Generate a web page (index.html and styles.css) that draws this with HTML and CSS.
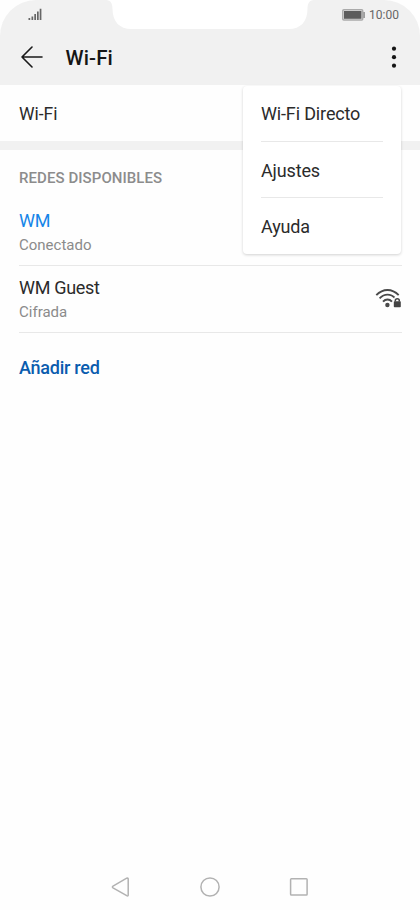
FILE: index.html
```
<!DOCTYPE html>
<html lang="es">
<head>
<meta charset="utf-8">
<title>Wi-Fi</title>
<link rel="stylesheet" href="styles.css">
</head>
<body>
<div class="phone">
  <header class="header">
    <svg class="notch" width="208" height="30" viewBox="0 0 208 30"><path d="M0 0C5 0 6.500 4 6.500 9C6.500 22 14 29 25 29H183C194 29 201.500 22 201.500 9C201.500 4 203 0 208 0Z" fill="#fff"/></svg>
    <div class="status">
      <svg class="signal" width="14" height="13" viewBox="0 0 14 13" fill="#666"><path d="M.5 10h1.700v2H.5zM3.500 8.500h1.700V12H3.500zM6.300 6h1.700v6H6.300zM9 3.500h1.700V12H9zM11.700.8h1.700V12h-1.700z"/></svg>
      <svg class="battery" width="24" height="12" viewBox="0 0 24 12"><rect x=".8" y=".8" width="19.900" height="10.200" rx="1" fill="#eee" stroke="#aaa" stroke-width="1.500"/><rect x="2" y="2" width="17.500" height="7.800" fill="#5d5d5d"/><path d="M21.400 3h1.400v6h-1.400z" fill="#888"/></svg>
      <span class="clock">10:00</span>
    </div>
    <div class="toolbar">
      <svg class="back" width="22" height="22" viewBox="0 0 22 22" fill="none" stroke="#1a1a1a" stroke-width="1.600" stroke-linecap="round" stroke-linejoin="round"><path d="M11 1L1 11L11 21M1 11H21"/></svg>
      <h1 class="title">Wi-Fi</h1>
      <svg class="more" width="6" height="22" viewBox="0 0 6 22" fill="#151515"><circle cx="3" cy="2.700" r="2.100"/><circle cx="3" cy="11.200" r="2.100"/><circle cx="3" cy="19.700" r="2.100"/></svg>
    </div>
    <nav class="menu">
      <div class="menu-item">Wi-Fi Directo</div>
      <div class="menu-item">Ajustes</div>
      <div class="menu-item">Ayuda</div>
    </nav>
  </header>
  <main>
    <div class="switch-row">Wi-Fi</div>
    <section class="networks">
      <h2 class="section-title">REDES DISPONIBLES</h2>
      <div class="network">
        <div><div class="name connected">WM</div><div class="state">Conectado</div></div>
      </div>
      <div class="network">
        <div><div class="name">WM Guest</div><div class="state">Cifrada</div></div>
        <svg class="wifi" width="27" height="20" viewBox="0 0 27 20"><g fill="none" stroke="#4a4a4a" stroke-width="1.900"><path d="M1.300 7.200C8 .2 17 .2 23.700 7.200"/><path d="M4.600 10.400C9.400 5.400 15.600 5.400 20.400 10.400"/><path d="M8 13.600C10.700 10.700 14.300 10.700 17 13.600"/></g><circle cx="12.400" cy="17" r="2.200" fill="#4a4a4a"/><path d="M18 12H19V11.500A3.200 3.200 0 0 1 25.400 11.500V12H26.300V20H18Z" fill="#fff"/><rect x="18.800" y="13.300" width="7" height="6" rx=".7" fill="#444"/><path d="M20.300 13.600V12.800A2 2 0 0 1 24.300 12.800V13.600" fill="none" stroke="#444" stroke-width="1.500"/></svg>
      </div>
      <div class="add">Añadir red</div>
    </section>
  </main>
  <footer class="nav">
    <svg width="20" height="20" viewBox="0 0 20 20"><path d="M2 9.200L15.700 1.200Q17.200.5 17.200 2V18Q17.200 19.500 15.700 18.700L2 10.800Q.8 10 2 9.200Z"/></svg>
    <svg width="20" height="20" viewBox="0 0 20 20"><circle cx="10" cy="10" r="9.100"/></svg>
    <svg width="20" height="20" viewBox="0 0 20 20"><rect x="1.600" y="1.700" width="16.500" height="16.300" rx=".8"/></svg>
  </footer>
</div>
</body>
</html>
```
FILE: styles.css
```
* { box-sizing: border-box; }
body { margin: 0; background: #fff; font-family: Roboto, sans-serif; color: #2b2b2b; }
svg { display: block; flex: none; }
h1, h2 { margin: 0; }
.phone { width: 420px; height: 910px; display: flex; flex-direction: column; background: #fefefe; }
.header { position: relative; height: 85px; background: #f1f1f1; border-radius: 36px 36px 0 0; }
.notch { position: absolute; left: 106px; top: 0; }
.status { height: 29px; display: flex; align-items: center; padding: 0 21px 0 28px; }
.battery { margin-left: auto; }
.clock { width: 30px; margin-left: 3px; font-size: 12px; line-height: 30px; color: #666; white-space: nowrap; }
.toolbar { height: 56px; display: flex; align-items: center; padding: 0 23px 0 21px; }
.title { margin-left: 22.600px; padding-top: 2px; font-size: 20.500px; font-weight: 500; line-height: 24px; letter-spacing: .1px; color: #151515; }
.more { margin-left: auto; }
.menu { position: absolute; z-index: 1; left: 243px; top: 86px; width: 158px; height: 168px; padding: 0 18px; background: #fff; border-radius: 4px; box-shadow: 0 1px 3px rgba(0, 0, 0, .18); }
.menu-item { height: 56px; line-height: 57px; font-size: 18px; letter-spacing: -.15px; border-bottom: 1px solid #e8e8e8; white-space: nowrap; }
.menu-item:first-child { line-height: 55px; }
.menu-item:last-child { border-bottom: 0; }
.switch-row { height: 65px; padding-left: 19px; line-height: 58px; font-size: 17.500px; border-bottom: 9px solid #f1f1f1; }
.networks { padding: 0 18px 0 19px; }
.section-title { padding-top: 18px; height: 48px; font-size: 15px; line-height: 20px; font-weight: 500; letter-spacing: .07px; color: #8c8c8c; }
.network { height: 67px; padding: 10px 0 0; border-bottom: 1px solid #e8e8e8; display: flex; justify-content: space-between; }
.network:first-of-type { height: 68px; padding-top: 11px; }
.name { font-size: 18px; line-height: 24px; letter-spacing: -.3px; }
.connected { color: #1685e8; }
.state { font-size: 15px; line-height: 25px; color: #8b8b8b; }
.wifi { margin-top: 12px; }
.add { margin-top: 23px; font-size: 18px; line-height: 24px; font-weight: 500; letter-spacing: -.25px; color: #0a5cae; }
.nav { height: 47px; margin-top: auto; padding: 0 111px 0 111px; display: flex; justify-content: space-between; align-items: center; }
.nav svg { fill: none; stroke: #b2b2b2; stroke-width: 1.500; }
```
